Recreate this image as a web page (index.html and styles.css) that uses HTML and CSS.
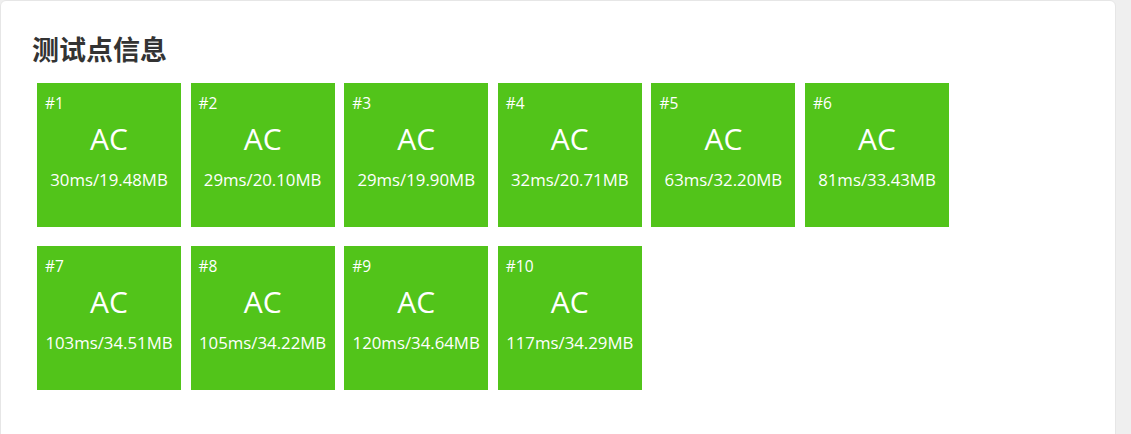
FILE: index.html
```html
<!DOCTYPE html>
<html lang="zh">
<head>
<meta charset="utf-8">
<link rel="stylesheet" href="styles.css">
</head>
<body>
<div class="card">
  <h2 class="title">测试点信息</h2>
  <div class="grid">
    <div class="case"><div class="num">#1</div><div class="status">AC</div><div class="stat">30ms/19.48MB</div></div>
    <div class="case"><div class="num">#2</div><div class="status">AC</div><div class="stat">29ms/20.10MB</div></div>
    <div class="case"><div class="num">#3</div><div class="status">AC</div><div class="stat">29ms/19.90MB</div></div>
    <div class="case"><div class="num">#4</div><div class="status">AC</div><div class="stat">32ms/20.71MB</div></div>
    <div class="case"><div class="num">#5</div><div class="status">AC</div><div class="stat">63ms/32.20MB</div></div>
    <div class="case"><div class="num">#6</div><div class="status">AC</div><div class="stat">81ms/33.43MB</div></div>
    <div class="case"><div class="num">#7</div><div class="status">AC</div><div class="stat">103ms/34.51MB</div></div>
    <div class="case"><div class="num">#8</div><div class="status">AC</div><div class="stat">105ms/34.22MB</div></div>
    <div class="case"><div class="num">#9</div><div class="status">AC</div><div class="stat">120ms/34.64MB</div></div>
    <div class="case"><div class="num">#10</div><div class="status">AC</div><div class="stat">117ms/34.29MB</div></div>
  </div>
</div>
</body>
</html>
```
FILE: styles.css
```css
html, body {
  margin: 0;
  padding: 0;
  background: #efefef;
  font-family: "Open Sans", "Noto Sans CJK SC", sans-serif;
}
.card {
  width: 1116px;
  min-height: 460px;
  box-sizing: border-box;
  background: #fff;
  border: 1px solid #e6e6e6;
  border-radius: 6px;
  padding: 30px 32px 0 36px;
}
.title {
  margin: 0 0 17px -5px;
  font-family: "Noto Sans CJK SC", sans-serif;
  font-size: 27px;
  line-height: 35px;
  font-weight: 700;
  color: #333;
}
.grid {
  display: flex;
  flex-wrap: wrap;
  width: 920px;
  column-gap: 9.6px;
  row-gap: 19px;
}
.case {
  width: 144px;
  height: 144px;
  box-sizing: border-box;
  background: #52c41a;
  color: #fff;
  padding: 10px 8px 0;
}
.num {
  font-size: 15.5px;
  line-height: 20px;
}
.status {
  margin-top: 6px;
  text-align: center;
  font-size: 30px;
  line-height: 40px;
}
.stat {
  margin-top: 10px;
  text-align: center;
  font-size: 16.8px;
  line-height: 22px;
  white-space: nowrap;
}
```
